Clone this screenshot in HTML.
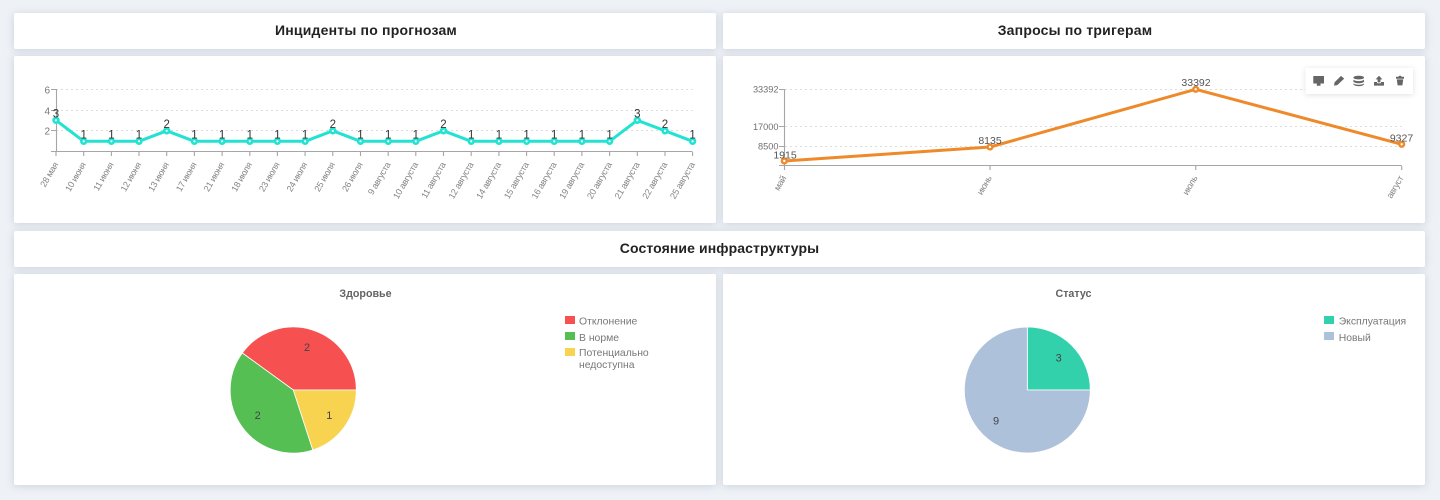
<!DOCTYPE html>
<html lang="ru">
<head>
<meta charset="utf-8">
<title>Dashboard</title>
<style>
html,body{margin:0;padding:0;width:1440px;height:500px;overflow:hidden;background:#eef1f6;font-family:"Liberation Sans",sans-serif;}
.p{position:absolute;background:#fff;border-radius:2px;box-shadow:0 1px 8px rgba(110,125,150,.27);}
.t{display:flex;align-items:center;justify-content:center;font-size:14px;font-weight:bold;color:#222;letter-spacing:.2px;padding-bottom:2px;box-sizing:border-box;}
.t span{filter:blur(.3px);}
svg{position:absolute;left:0;top:0;font-family:"Liberation Sans",sans-serif;filter:blur(.35px);}
</style>
</head>
<body>
<div class="p t" style="left:14px;top:13px;width:702px;height:36px;padding-left:2px"><span>Инциденты по прогнозам</span></div>
<div class="p t" style="left:723px;top:13px;width:702px;height:36px;padding-left:2px"><span>Запросы по тригерам</span></div>
<div class="p" style="left:14px;top:56px;width:702px;height:167px"></div>
<div class="p" style="left:723px;top:56px;width:702px;height:167px"></div>
<div class="p t" style="left:14px;top:231px;width:1411px;height:36px;letter-spacing:.1px"><span>Состояние инфраструктуры</span></div>
<div class="p" style="left:14px;top:274px;width:702px;height:211px"></div>
<div class="p" style="left:723px;top:274px;width:702px;height:211px"></div>

<svg width="1440" height="500" viewBox="0 0 1440 500">
  <!-- Chart 1 grid -->
  <g stroke="#dcdcdc" stroke-width="1" stroke-dasharray="2 3" fill="none">
    <path d="M56 89.5H692.6M56 110.5H692.6M56 130.5H692.6"/>
  </g>
  <g stroke="#a6a6a6" stroke-width="1.1" fill="none">
    <path d="M56.5 89V152M51 89.5H56M51 110.5H56M51 130.5H56M51 151.5H692.6"/>
    <path d="M56 152v4M83.7 152v4M111.4 152v4M139 152v4M166.7 152v4M194.4 152v4M222.1 152v4M249.8 152v4M277.4 152v4M305.1 152v4M332.8 152v4M360.5 152v4M388.2 152v4M415.8 152v4M443.5 152v4M471.2 152v4M498.9 152v4M526.6 152v4M554.2 152v4M581.9 152v4M609.6 152v4M637.3 152v4M665 152v4M692.6 152v4"/>
  </g>
  <g font-size="10" fill="#777" text-anchor="end">
    <text x="50" y="93.3">6</text><text x="50" y="114.3">4</text><text x="50" y="134.3">2</text>
  </g>
  <g font-size="9" fill="#858585" text-anchor="end" letter-spacing="-.3">
    <text transform="translate(58.5,164.5) rotate(-60)">28 мая</text>
    <text transform="translate(86.2,164.5) rotate(-60)">10 июня</text>
    <text transform="translate(113.9,164.5) rotate(-60)">11 июня</text>
    <text transform="translate(141.5,164.5) rotate(-60)">12 июня</text>
    <text transform="translate(169.2,164.5) rotate(-60)">13 июня</text>
    <text transform="translate(196.9,164.5) rotate(-60)">17 июня</text>
    <text transform="translate(224.6,164.5) rotate(-60)">21 июня</text>
    <text transform="translate(252.3,164.5) rotate(-60)">18 июля</text>
    <text transform="translate(279.9,164.5) rotate(-60)">23 июля</text>
    <text transform="translate(307.6,164.5) rotate(-60)">24 июля</text>
    <text transform="translate(335.3,164.5) rotate(-60)">25 июля</text>
    <text transform="translate(363,164.5) rotate(-60)">26 июля</text>
    <text transform="translate(390.7,164.5) rotate(-60)">9 августа</text>
    <text transform="translate(418.3,164.5) rotate(-60)">10 августа</text>
    <text transform="translate(446,164.5) rotate(-60)">11 августа</text>
    <text transform="translate(473.7,164.5) rotate(-60)">12 августа</text>
    <text transform="translate(501.4,164.5) rotate(-60)">14 августа</text>
    <text transform="translate(529.1,164.5) rotate(-60)">15 августа</text>
    <text transform="translate(556.7,164.5) rotate(-60)">16 августа</text>
    <text transform="translate(584.4,164.5) rotate(-60)">19 августа</text>
    <text transform="translate(612.1,164.5) rotate(-60)">20 августа</text>
    <text transform="translate(639.8,164.5) rotate(-60)">21 августа</text>
    <text transform="translate(667.5,164.5) rotate(-60)">22 августа</text>
    <text transform="translate(695.1,164.5) rotate(-60)">25 августа</text>
  </g>
  <!-- Chart 1 line -->
  <path d="M56 120.3L83.7 141.3H139L166.7 130.8L194.4 141.3H305.1L332.8 130.8L360.5 141.3H415.8L443.5 130.8L471.2 141.3H609.6L637.3 120.3L665 130.8L692.6 141.3" fill="none" stroke="#22e3d2" stroke-width="3" stroke-linejoin="round"/>
  <g fill="#fff" stroke="#22e3d2" stroke-width="2.6">
    <circle cx="56" cy="120.3" r="2.4"/><circle cx="83.7" cy="141.3" r="2.4"/><circle cx="111.4" cy="141.3" r="2.4"/><circle cx="139" cy="141.3" r="2.4"/><circle cx="166.7" cy="130.8" r="2.4"/><circle cx="194.4" cy="141.3" r="2.4"/><circle cx="222.1" cy="141.3" r="2.4"/><circle cx="249.8" cy="141.3" r="2.4"/><circle cx="277.4" cy="141.3" r="2.4"/><circle cx="305.1" cy="141.3" r="2.4"/><circle cx="332.8" cy="130.8" r="2.4"/><circle cx="360.5" cy="141.3" r="2.4"/><circle cx="388.2" cy="141.3" r="2.4"/><circle cx="415.8" cy="141.3" r="2.4"/><circle cx="443.5" cy="130.8" r="2.4"/><circle cx="471.2" cy="141.3" r="2.4"/><circle cx="498.9" cy="141.3" r="2.4"/><circle cx="526.6" cy="141.3" r="2.4"/><circle cx="554.2" cy="141.3" r="2.4"/><circle cx="581.9" cy="141.3" r="2.4"/><circle cx="609.6" cy="141.3" r="2.4"/><circle cx="637.3" cy="120.3" r="2.4"/><circle cx="665" cy="130.8" r="2.4"/><circle cx="692.6" cy="141.3" r="2.4"/>
  </g>
  <g font-size="11.5" fill="#333" text-anchor="middle">
    <text x="56" y="117.5">3</text><text x="83.7" y="138.5">1</text><text x="111.4" y="138.5">1</text><text x="139" y="138.5">1</text><text x="166.7" y="128">2</text><text x="194.4" y="138.5">1</text><text x="222.1" y="138.5">1</text><text x="249.8" y="138.5">1</text><text x="277.4" y="138.5">1</text><text x="305.1" y="138.5">1</text><text x="332.8" y="128">2</text><text x="360.5" y="138.5">1</text><text x="388.2" y="138.5">1</text><text x="415.8" y="138.5">1</text><text x="443.5" y="128">2</text><text x="471.2" y="138.5">1</text><text x="498.9" y="138.5">1</text><text x="526.6" y="138.5">1</text><text x="554.2" y="138.5">1</text><text x="581.9" y="138.5">1</text><text x="609.6" y="138.5">1</text><text x="637.3" y="117.5">3</text><text x="665" y="128">2</text><text x="692.6" y="138.5">1</text>
  </g>

  <!-- Chart 2 -->
  <g stroke="#dcdcdc" stroke-width="1" stroke-dasharray="2 3" fill="none">
    <path d="M785 89.5H1401.7M785 126.5H1401.7M785 146.5H1401.7"/>
  </g>
  <g stroke="#a6a6a6" stroke-width="1.1" fill="none">
    <path d="M784.5 89V166M779 89.5H784M779 126.5H784M779 146.5H784M779 165.5H1401.7"/>
    <path d="M784.5 166v4M990 166v4M1195.7 166v4M1401.7 166v4"/>
  </g>
  <g font-size="9.2" fill="#707070" text-anchor="end">
    <text x="778.5" y="92.7">33392</text><text x="778.5" y="130">17000</text><text x="778.5" y="149.3">8500</text>
  </g>
  <g font-size="9" fill="#858585" text-anchor="end" letter-spacing="-.3">
    <text transform="translate(786.5,178) rotate(-60)">май</text>
    <text transform="translate(992,178) rotate(-60)">июнь</text>
    <text transform="translate(1197.7,178) rotate(-60)">июль</text>
    <text transform="translate(1403.7,178) rotate(-60)">август</text>
  </g>
  <path d="M784.3 161L990 147L1195.7 89.3L1401.7 144.3" fill="none" stroke="#ee8a2a" stroke-width="3" stroke-linejoin="round"/>
  <g fill="#fff" stroke="#ee8a2a" stroke-width="2.4">
    <circle cx="784.3" cy="161" r="2.4"/><circle cx="990" cy="147" r="2.4"/><circle cx="1195.7" cy="89.3" r="2.4"/><circle cx="1401.7" cy="144.3" r="2.4"/>
  </g>
  <g font-size="10.5" fill="#555" text-anchor="middle">
    <text x="785" y="158.5">1915</text><text x="990" y="144">8135</text><text x="1196" y="86">33392</text><text x="1401.5" y="141.5">9327</text>
  </g>

  <!-- Toolbox -->
  <rect x="1305.5" y="68" width="107.5" height="26" fill="#fff" style="filter:drop-shadow(0 1px 3px rgba(0,0,0,.12))"/>
  <g fill="#666" stroke="none">
    <path d="M1313.3 76H1324V83.5H1320.5V85.8H1316.8V83.5H1313.3Z"/>
    <path d="M1334 85.6L1334.5 82.4L1341 75.9L1344.2 78.6L1337.3 85.1Z"/>
    <path d="M1353.4 77.6C1353.4 75.2 1364 75.2 1364 77.6C1364 80 1353.4 80 1353.4 77.6Z"/>
    <path d="M1353.4 79.6C1355 81.6 1362.4 81.6 1364 79.6V81.8C1362.4 83.8 1355 83.8 1353.4 81.8Z"/>
    <path d="M1353.4 83.4C1355 85.2 1362.4 85.2 1364 83.4V84.4C1362.4 86.8 1355 86.8 1353.4 84.4Z"/>
    <path d="M1374 82H1377V83.3H1381V82H1384V85.6H1374Z"/>
    <path d="M1379 75.8L1382.4 79.4H1380.4V82.4H1377.6V79.4H1375.6Z"/>
    <path d="M1398.4 76.8L1399.2 75.8H1400.8L1401.6 76.8H1404V78.8H1396V76.8Z"/>
    <path d="M1396.8 79.4H1403.2L1402.4 85.4H1397.6Z"/>
  </g>

  <!-- Pie titles -->
  <g font-size="10.7" font-weight="bold" fill="#636363" text-anchor="middle">
    <text x="365.5" y="297">Здоровье</text>
    <text x="1073.5" y="297">Статус</text>
  </g>
  <!-- Pie 1 -->
  <g stroke="#fff" stroke-width="0.8" stroke-linejoin="round">
    <path d="M293.3 390L356.3 390A63 63 0 0 0 242.3 353Z" fill="#f65050"/>
    <path d="M293.3 390L242.3 353A63 63 0 0 0 312.8 450Z" fill="#56bf53"/>
    <path d="M293.3 390L312.8 450A63 63 0 0 0 356.3 390Z" fill="#f8d34f"/>
  </g>
  <g font-size="11" fill="#444" text-anchor="middle">
    <text x="307" y="351">2</text><text x="257.7" y="419">2</text><text x="329.3" y="419">1</text>
  </g>
  <rect x="565" y="316" width="10" height="8" fill="#f65050"/>
  <rect x="565" y="332" width="10" height="8" fill="#56bf53"/>
  <rect x="565" y="348" width="10" height="8" fill="#f8d34f"/>
  <g font-size="10.4" fill="#777">
    <text x="579" y="324.5">Отклонение</text>
    <text x="579" y="341">В норме</text>
    <text x="579" y="356">Потенциально</text>
    <text x="579" y="368">недоступна</text>
  </g>

  <!-- Pie 2 -->
  <g stroke="#fff" stroke-width="0.8" stroke-linejoin="round">
    <path d="M1027.3 390V327A63 63 0 0 1 1090.3 390Z" fill="#33d1ab"/>
    <path d="M1027.3 390H1090.3A63 63 0 1 1 1027.3 327Z" fill="#adc1db"/>
  </g>
  <g font-size="11" fill="#444" text-anchor="middle">
    <text x="1058.7" y="361.5">3</text><text x="996" y="424.5">9</text>
  </g>
  <rect x="1324" y="316" width="10" height="8" fill="#33d1ab"/>
  <rect x="1324" y="332" width="10" height="8" fill="#adc1db"/>
  <g font-size="10.4" fill="#777">
    <text x="1338.7" y="324.5">Эксплуатация</text>
    <text x="1338.7" y="341">Новый</text>
  </g>
</svg>
</body>
</html>
